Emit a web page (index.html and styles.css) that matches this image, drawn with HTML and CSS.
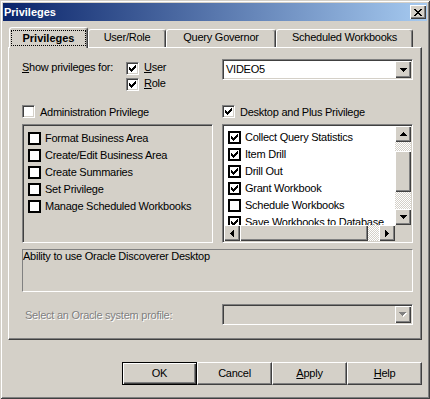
FILE: index.html
```html
<!DOCTYPE html>
<html lang="en">
<head>
    <meta charset="UTF-8">
    <title>Privileges</title>
    <link rel="stylesheet" href="styles.css">
</head>
<body>
<div class="window">
    <div class="titlebar">
        <span>Privileges</span>
        <span class="close"><svg width="8" height="7" viewBox="0 0 8 7"><path d="M0 0h2v1H0zM6 0h2v1H6zM1 1h2v1H1zM5 1h2v1H5zM2 2h4v1H2zM3 3h2v1H3zM2 4h4v1H2zM1 5h2v1H1zM5 5h2v1H5zM0 6h2v1H0zM6 6h2v1H6z"/></svg></span>
    </div>

    <div class="content">
        <div class="tabs">
            <div class="tab t1 active"><span class="focus">Privileges</span></div>
            <div class="tab t2">User/Role</div>
            <div class="tab t3">Query Governor</div>
            <div class="tab t4">Scheduled Workbooks</div>
        </div>

        <div class="panel">
            <div class="showfor">
                <span class="showlabel"><u>S</u>how privileges for:</span>
                <div class="opts">
                    <div class="opt"><span class="cb"><svg class="tick" viewBox="0 0 7 7"><path d="M0 2h1v3H0zM1 3h1v3H1zM2 4h1v3H2zM3 3h1v3H3zM4 2h1v3H4zM5 1h1v3H5zM6 0h1v3H6z"/></svg></span><span><u>U</u>ser</span></div>
                    <div class="opt"><span class="cb"><svg class="tick" viewBox="0 0 7 7"><path d="M0 2h1v3H0zM1 3h1v3H1zM2 4h1v3H2zM3 3h1v3H3zM4 2h1v3H4zM5 1h1v3H5zM6 0h1v3H6z"/></svg></span><span><u>R</u>ole</span></div>
                </div>
            </div>
            <div class="combo">
                <span class="combo-text">VIDEO5</span>
                <span class="sbtn"><svg width="7" height="4" viewBox="0 0 7 4"><path d="M0 0h7v1H0zM1 1h5v1H1zM2 2h3v1H2zM3 3h1v1H3z"/></svg></span>
            </div>

            <div class="hdr"><span class="cb"></span><span class="hdr-text">Administration Privilege</span></div>
            <div class="hdr"><span class="cb"><svg class="tick" viewBox="0 0 7 7"><path d="M0 2h1v3H0zM1 3h1v3H1zM2 4h1v3H2zM3 3h1v3H3zM4 2h1v3H4zM5 1h1v3H5zM6 0h1v3H6z"/></svg></span><span class="hdr-text">Desktop and Plus Privilege</span></div>

            <div class="list list-off">
                <div class="item"><span class="fcb"></span>Format Business Area</div>
                <div class="item"><span class="fcb"></span>Create/Edit Business Area</div>
                <div class="item"><span class="fcb"></span>Create Summaries</div>
                <div class="item"><span class="fcb"></span>Set Privilege</div>
                <div class="item"><span class="fcb"></span>Manage Scheduled Workbooks</div>
            </div>

            <div class="list list-on">
                <div class="items">
                    <div class="item"><span class="fcb"><svg class="tick" viewBox="0 0 7 7"><path d="M0 2h1v3H0zM1 3h1v3H1zM2 4h1v3H2zM3 3h1v3H3zM4 2h1v3H4zM5 1h1v3H5zM6 0h1v3H6z"/></svg></span>Collect Query Statistics</div>
                    <div class="item"><span class="fcb"><svg class="tick" viewBox="0 0 7 7"><path d="M0 2h1v3H0zM1 3h1v3H1zM2 4h1v3H2zM3 3h1v3H3zM4 2h1v3H4zM5 1h1v3H5zM6 0h1v3H6z"/></svg></span>Item Drill</div>
                    <div class="item"><span class="fcb"><svg class="tick" viewBox="0 0 7 7"><path d="M0 2h1v3H0zM1 3h1v3H1zM2 4h1v3H2zM3 3h1v3H3zM4 2h1v3H4zM5 1h1v3H5zM6 0h1v3H6z"/></svg></span>Drill Out</div>
                    <div class="item"><span class="fcb"><svg class="tick" viewBox="0 0 7 7"><path d="M0 2h1v3H0zM1 3h1v3H1zM2 4h1v3H2zM3 3h1v3H3zM4 2h1v3H4zM5 1h1v3H5zM6 0h1v3H6z"/></svg></span>Grant Workbook</div>
                    <div class="item"><span class="fcb"></span>Schedule Workbooks</div>
                    <div class="item"><span class="fcb"><svg class="tick" viewBox="0 0 7 7"><path d="M0 2h1v3H0zM1 3h1v3H1zM2 4h1v3H2zM3 3h1v3H3zM4 2h1v3H4zM5 1h1v3H5zM6 0h1v3H6z"/></svg></span>Save Workbooks to Database</div>
                </div>
                <div class="vscroll">
                    <span class="sbtn sq"><svg width="7" height="4" viewBox="0 0 7 4"><path d="M3 0h1v1H3zM2 1h3v1H2zM1 2h5v1H1zM0 3h7v1H0z"/></svg></span>
                    <span class="track vt1"></span>
                    <span class="thumb vthumb"></span>
                    <span class="track grow"></span>
                    <span class="sbtn sq"><svg width="7" height="4" viewBox="0 0 7 4"><path d="M0 0h7v1H0zM1 1h5v1H1zM2 2h3v1H2zM3 3h1v1H3z"/></svg></span>
                </div>
                <div class="hscroll">
                    <span class="sbtn sq"><svg width="4" height="7" viewBox="0 0 4 7"><path d="M3 0h1v7H3zM2 1h1v5H2zM1 2h1v3H1zM0 3h1v1H0z"/></svg></span>
                    <span class="thumb hthumb"></span>
                    <span class="track grow"></span>
                    <span class="sbtn sq"><svg width="4" height="7" viewBox="0 0 4 7"><path d="M0 0h1v7H0zM1 1h1v5H1zM2 2h1v3H2zM3 3h1v1H3z"/></svg></span>
                </div>
                <div class="corner"></div>
            </div>

            <div class="desc">Ability to use Oracle Discoverer Desktop</div>

            <div class="profile-label">Select an Oracle system profile:</div>
            <div class="combo combo-off">
                <span class="combo-text"></span>
                <span class="sbtn"><svg width="8" height="5" viewBox="0 0 8 5"><path fill="#fff" d="M1 1h7v1H1zM2 2h5v1H2zM3 3h3v1H3zM4 4h1v1H4z"/><path fill="#808080" d="M0 0h7v1H0zM1 1h5v1H1zM2 2h3v1H2zM3 3h1v1H3z"/></svg></span>
            </div>
        </div>

        <div class="buttons">
            <span class="btn default">OK</span>
            <span class="btn">Cancel</span>
            <span class="btn"><u>A</u>pply</span>
            <span class="btn"><u>H</u>elp</span>
        </div>
    </div>
</div>
</body>
</html>
```

FILE: styles.css
```css
* {box-sizing: border-box;}
body {margin: 0; background: #d4d0c8; font: 11px/13px "Liberation Sans", Arial, sans-serif; letter-spacing: -0.25px; color: #000;}
u {text-decoration: underline; text-underline-offset: 1px;}

.window {width: 430px; height: 399px; padding: 3px; background: #d4d0c8; box-shadow: inset 1px 1px #d4d0c8, inset -1px -1px #404040, inset 2px 2px #fff, inset -2px -2px #808080;}
.titlebar {height: 18px; display: flex; align-items: center; justify-content: space-between; padding: 0 1px 0 1px; background: linear-gradient(to right, #0a246a, #a6caf0); color: #fff; font-weight: bold; letter-spacing: 0;}
.close {width: 16px; height: 14px; padding: 4px 0 0 4px; background: #d4d0c8; box-shadow: inset 1px 1px #fff, inset -1px -1px #404040, inset -2px -2px #808080;}
.close svg {display: block;}

.content {padding: 6px 5px 0;}
.tabs {display: flex; align-items: flex-end; height: 20px; padding-left: 1px;}
.tab {height: 18px; padding-top: 1px; text-align: center; white-space: nowrap; border: 1px solid; border-color: #fff #404040 transparent #fff; border-bottom: 0; border-radius: 3px 3px 0 0; box-shadow: inset -1px 0 #808080; background: #d4d0c8;}
.tab.active {height: 21px; margin-bottom: -1px; padding: 2px 1px 0; font-weight: bold; letter-spacing: 0; position: relative; z-index: 1;}
.focus {display: block; height: 16px; padding-top: 1px; border: 1px dotted #000;}
.t1 {width: 79px;}
.t2 {width: 78px;}
.t3 {width: 110px;}
.t4 {width: 137px;}

.panel {height: 293px; padding: 11px 8px 0 13px; border: 1px solid; border-color: #fff #404040 #404040 #fff; box-shadow: inset -1px -1px #808080; display: grid; grid-template-columns: 191px 191px; grid-template-rows: 45px 20px 119px auto auto; column-gap: 9px; align-content: start;}

.cb {width: 13px; height: 13px; flex: none; background: #fff; border: 1px solid; border-color: #808080 #fff #fff #808080; box-shadow: inset 1px 1px #404040, inset -1px -1px #d4d0c8;}
.cb .tick {display: block; width: 7px; height: 7px; margin: 2px;}
.fcb {width: 13px; height: 13px; flex: none; background: #fff; border: 2px solid #000;}
.fcb .tick {display: block; width: 7px; height: 7px; margin: 1px;}

.showfor {display: flex; padding-top: 2px;}
.showlabel {width: 104px; flex: none;}
.opt {display: flex; gap: 5px; height: 16px;}
.opt .cb {margin-top: 1px;}

.combo {height: 21px; display: flex; background: #fff; border: 1px solid; border-color: #808080 #fff #fff #808080; box-shadow: inset 1px 1px #404040, inset -1px -1px #d4d0c8; padding: 1px;}
.combo-text {flex: 1; padding: 2px 0 0 2px;}
.combo-off {background: #d4d0c8;}

.sbtn {width: 16px; display: flex; align-items: center; justify-content: center; background: #d4d0c8; box-shadow: inset 1px 1px #fff, inset -1px -1px #404040, inset -2px -2px #808080;}
.sbtn svg {display: block;}
.sq {height: 16px; flex: none;}

.hdr {display: flex; gap: 5px; padding-top: 1px;}
.hdr-text {margin-top: 1px;}

.list {border: 1px solid; border-color: #808080 #fff #fff #808080; box-shadow: inset 1px 1px #404040, inset -1px -1px #d4d0c8; padding: 1px; overflow: hidden;}
.list-off {padding-top: 5px; background: #d4d0c8;}
.list-on {background: #fff; display: grid; grid-template-columns: 171px 16px; grid-template-rows: 99px 16px;}
.items {overflow: hidden; padding-top: 3px;}
.item {display: flex; align-items: center; gap: 4px; height: 17px; padding-left: 4px; white-space: nowrap;}

.track {background: repeating-conic-gradient(#fff 0 25%, #d4d0c8 0 50%) 0 0 / 2px 2px;}
.grow {flex: 1;}
.thumb {flex: none; background: #d4d0c8; box-shadow: inset 1px 1px #fff, inset -1px -1px #404040, inset -2px -2px #808080;}
.vscroll {display: flex; flex-direction: column;}
.vt1 {height: 9px; flex: none;}
.vthumb {height: 41px;}
.hscroll {display: flex;}
.hthumb {width: 128px;}
.corner {background: #d4d0c8;}

.desc {grid-column: 1 / 3; height: 43px; margin-top: 6px; border: 1px solid; border-color: #808080 #fff #fff #808080;}

.profile-label {margin-top: 12px; padding: 5px 0 0 3px; color: #808080; text-shadow: 1px 1px #fff;}
.combo-off {margin-top: 12px;}

.buttons {display: flex; justify-content: flex-end; margin-top: 22px;}
.btn {width: 75px; height: 23px; display: flex; align-items: center; justify-content: center; background: #d4d0c8; border: 1px solid; border-color: #fff #404040 #404040 #fff; box-shadow: inset -1px -1px #808080;}
.btn.default {border-color: #000; box-shadow: inset 1px 1px #fff, inset -1px -1px #404040, inset -2px -2px #808080;}
```
